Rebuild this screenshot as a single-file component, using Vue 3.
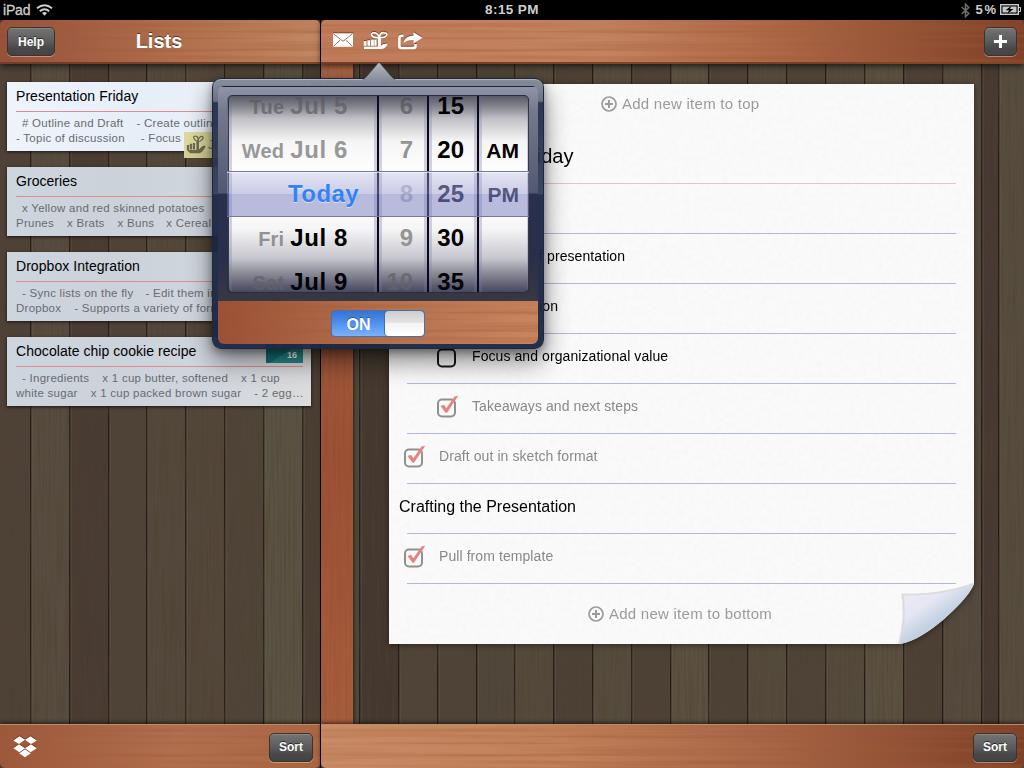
<script setup>
const plankEdges = [-9, 31, 70, 109, 147, 186, 225, 264, 303, 321, 360, 399, 438, 477, 515, 554, 593, 632, 671, 709, 748, 787, 826, 865, 904, 943, 982, 999, 1024]
const plankFills = ['#4e4137', '#564c3f', '#483b32', '#4f4338', '#52483b', '#52473a', '#4f4438', '#5a5343', '#493d33', '#51483b', '#43382f', '#504439', '#4f4338', '#50473b', '#544a3c', '#4c4035', '#554c3e', '#4d4136', '#5a5141', '#4d4136', '#544b3c', '#4e4337', '#544b3c', '#5a5140', '#4c4035', '#544a3d', '#463931', '#564d3f']
const planks = plankFills.map((fill, i) => ({ x: plankEdges[i], w: plankEdges[i + 1] - plankEdges[i], fill }))

const lists = [
  { title: 'Presentation Friday', active: true, lines: [[[6, '# Outline and Draft'], [13, '- Create outline of']], [[0, '- Topic of discussion'], [16, '- Focus']]] },
  { title: 'Groceries', lines: [[[6, 'x Yellow and red skinned potatoes']], [[0, 'Prunes'], [13, 'x Brats'], [13, 'x Buns'], [12, 'x Cereal']]] },
  { title: 'Dropbox Integration', lines: [[[6, '- Sync lists on the fly'], [12, '- Edit them in']], [[0, 'Dropbox'], [13, '- Supports a variety of formats']]] },
  { title: 'Chocolate chip cookie recipe', badge: true, lines: [[[6, '- Ingredients'], [13, 'x 1 cup butter, softened'], [13, 'x 1 cup']], [[0, 'white sugar'], [13, 'x 1 cup packed brown sugar'], [13, '- 2 egg…']]] },
]

const items = [
  { text: 'Outline and Draft', kind: 'head' },
  { text: 'Create outline of presentation', kind: 'item' },
  { text: 'Topic of discussion', kind: 'item' },
  { text: 'Focus and organizational value', kind: 'item', sub: true },
  { text: 'Takeaways and next steps', kind: 'item', sub: true, done: true },
  { text: 'Draft out in sketch format', kind: 'item', done: true },
  { text: 'Crafting the Presentation', kind: 'head' },
  { text: 'Pull from template', kind: 'item', done: true },
]

const days = [
  { day: 'Tue', date: 'Jul 5', past: true },
  { day: 'Wed', date: 'Jul 6', past: true },
  { today: true },
  { day: 'Fri', date: 'Jul 8' },
  { day: 'Sat', date: 'Jul 9' },
]
const hours = ['6', '7', '8', '9', '10']
const minutes = ['15', '20', '25', '30', '35']
const periods = ['', 'AM', 'PM', '', '']
</script>

<template>
  <div class="screen">
    <svg class="floor" width="1024" height="768">
      <defs>
        <filter id="grainV" x="0" y="0" width="100%" height="100%">
          <feTurbulence type="fractalNoise" baseFrequency="0.45 0.012" numOctaves="3" seed="4" />
          <feColorMatrix values="0 0 0 0 .08  0 0 0 0 .05  0 0 0 0 .03  1.2 0 0 0 -.48" />
        </filter>
        <filter id="grainH" x="0" y="0" width="100%" height="100%">
          <feTurbulence type="fractalNoise" baseFrequency="0.004 0.22" numOctaves="3" seed="9" />
          <feColorMatrix values="0 0 0 0 .35  0 0 0 0 .1  0 0 0 0 .03  .9 0 0 0 -.34" />
        </filter>
        <filter id="fibre" x="0" y="0" width="100%" height="100%">
          <feTurbulence type="fractalNoise" baseFrequency="0.18" numOctaves="2" seed="2" />
          <feColorMatrix values="0 0 0 0 .5  0 0 0 0 .5  0 0 0 0 .5  .1 0 0 0 -.036" />
        </filter>
      </defs>
      <g v-for="p in planks" :key="p.x">
        <rect :x="p.x" y="0" :width="p.w" height="768" :fill="p.fill" />
        <rect :x="p.x - 1" y="0" width="1.4" height="768" fill="#241c18" />
        <rect :x="p.x + 0.6" y="0" width="1" height="768" fill="#6a5e4e" opacity=".5" />
      </g>
      <rect width="1024" height="768" filter="url(#grainV)" />
    </svg>

    <header class="status">
      <div class="st-left">
        <span>iPad</span>
        <svg width="17" height="12" viewBox="0 0 17 12" fill="none" stroke="#cfcfcf" stroke-width="2">
          <path d="M1 4.3Q8.500 -1.700 16 4.300" /><path d="M3.800 7.200Q8.500 3.200 13.200 7.200" />
          <path d="M6 9L8.500 11.700 11 9Q8.500 7.200 6 9Z" fill="#cfcfcf" stroke="none" />
        </svg>
      </div>
      <span class="clock">8:15 PM</span>
      <div class="st-right">
        <svg width="9" height="15" viewBox="0 0 9 15" fill="none" stroke="#707070" stroke-width="1.500"><path d="M.7 4L7.800 10.500 4.500 13.700V1.300L7.800 4.500 .7 11" /></svg>
        <span class="pct">5 %</span>
        <svg class="batt" width="21" height="12" viewBox="0 0 21 12">
          <rect x=".7" y=".7" width="17.600" height="9.600" fill="none" stroke="#ccc" stroke-width="1.400" />
          <rect x="2.500" y="2.500" width="14" height="6" fill="#c8c8c8" />
          <path d="M19 3.500h1.500v4H19" fill="none" stroke="#ccc" /><path d="M11.500 1.700L5.500 6.300H9L7.500 9.700L13.500 5H10Z" fill="#000" />
        </svg>
      </div>
    </header>

    <main class="split">
      <section class="side">
        <div class="bar top side-top">
          <svg class="grain" width="320" height="44"><rect width="320" height="44" filter="url(#grainH)" /></svg>
          <button class="btn help">Help</button>
          <h1>Lists</h1>
        </div>
        <div class="cards">
          <article v-for="l in lists" :key="l.title" class="card" :class="{ active: l.active }">
            <h2>{{ l.title }}</h2>
            <div class="preview">
              <p v-for="(line, n) in l.lines" :key="n">
                <span v-for="seg in line" :key="seg[1]" :style="{ marginLeft: seg[0] + 'px' }">{{ seg[1] }}</span>
              </p>
            </div>
            <div v-if="l.active" class="sticky">
              <svg width="20" height="22" viewBox="0 0 24 24" fill="#6d6b50">
                <path d="M1 12h2.700v6H1zM4.600 10.500h2.700v7H4.600zM8.200 9.500h2.700v8H8.200zM12.500 8h3v10h-3zM1 18h13c2 0 3-4 8-5.500l1.500 1c-2 5-5 8.500-9 8.500H5z" />
                <path d="M14 8C8 5 8 1 12 1.500S14 8 14 8C15 3 18 .5 20 2S18 8 14 8Z" fill="none" stroke="#6d6b50" stroke-width="1.500" />
              </svg>
              <span>Ju</span>
            </div>
            <div v-if="l.badge" class="badge"><i>3</i><b>16</b></div>
          </article>
        </div>
        <div class="bar bottom side-bottom">
          <svg class="grain" width="320" height="44"><rect width="320" height="44" filter="url(#grainH)" /></svg>
          <svg class="dropbox" width="24" height="22" viewBox="0 0 24 22" fill="#fff">
            <path d="M6.500 .3L12 3.800 6 8 .3 4.500ZM17.500 .3L12 3.800 18 8 23.700 4.500ZM6 8.200L12 12.300 6.500 16.200 .3 12.300ZM18 8.200L12 12.300 17.500 16.200 23.700 12.300ZM12 13.200L17.800 17.200 12 21.200 6.200 17.200Z" />
          </svg>
          <button class="btn sort">Sort</button>
        </div>
      </section>

      <section class="detail">
        <div class="bar top detail-top">
          <svg class="grain" width="703" height="44"><rect width="703" height="44" filter="url(#grainH)" /></svg>
          <svg class="tools" width="92" height="20" viewBox="0 0 92 20">
            <path d="M0 2.300h20v13.500H0z" fill="#fff" /><path d="M.5 2.800L10 10.300 19.500 2.800M.5 15.300L7.500 8.800M19.500 15.300L12.500 8.800" fill="none" stroke="#99735f" />
            <g fill="#fff">
              <path d="M30.700 10h2.800v4.800h-2.800zM34.400 9.300h2.800v5.500h-2.800zM38.100 8.500h2.800v6.300h-2.800zM41.300 8.500h2.300v6.300h-2.300zM45 6h3v9.500h-3z" />
              <path d="M31 15.600h13.500c3 0 4-1.500 6-2.500l4-.7c-1 4-3.500 5.600-7.500 5.600H31z" />
              <path d="M46.300 6.500C38 7.500 36.500 1.800 41 1.700S46 6.500 46.300 6.500C47 2.500 49 1.500 51 1.700 56 2 54.500 7 46.300 6.500Z" fill="none" stroke="#fff" stroke-width="1.600" />
              <path d="M80.500 1.200L89.500 6.700 80.500 12.300V9C75.500 8.800 73.500 10 70.500 12 71.500 7 75 4.700 80.500 4.700Z" />
            </g>
            <path d="M70.500 4.800H68.500Q66.400 4.800 66.400 7V15Q66.400 17 68.500 17H80.500Q82.500 17 82.500 15V13" fill="none" stroke="#fff" stroke-width="2.600" />
          </svg>
          <button class="btn add"><svg width="13" height="13"><path d="M0 6.500h13M6.500 0v13" stroke="#fff" stroke-width="3" /></svg></button>
        </div>

        <div class="body">
          <div class="rail"><svg width="32" height="660"><rect width="32" height="660" filter="url(#grainV)" opacity=".3" /></svg></div>
          <div class="sheet">
            <svg class="paper" width="585" height="560">
              <defs><linearGradient id="curl" x1=".15" y1=".1" x2=".65" y2=".7"><stop offset="0" stop-color="#ece9f5" /><stop offset=".4" stop-color="#e5e7f3" /><stop offset=".75" stop-color="#c5d3e2" /><stop offset="1" stop-color="#b8cddd" /></linearGradient>
                <clipPath id="sheetShape"><path d="M0 0H585V500C580 512 566 525 554 536C542 546 525 558 511 560H0Z" /></clipPath></defs>
              <g clip-path="url(#sheetShape)"><rect width="585" height="560" fill="#fafafa" /><rect width="585" height="560" filter="url(#fibre)" />
                <path d="M514.500 511.500Q550 513 585 501L554 536L511 560Q518 535 514.500 511.500Z" fill="none" stroke="#777" stroke-opacity=".22" stroke-width="4" />
              </g>
              <path d="M515 511.500Q555 512 585 500C580 512 566 525 554 536C542 546 525 558 511 560Q518 540 515 511.500Z" fill="url(#curl)" />
            </svg>
            <div class="adder first"><svg width="16" height="16" viewBox="0 0 16 16" fill="none" stroke="#9b9b9b" stroke-width="1.700"><circle cx="8" cy="8" r="7" /><path d="M4 8h8M8 4v8" stroke-width="2" /></svg>Add new item to top</div>
            <h3>Presentation Friday</h3>
            <ul>
              <li v-for="it in items" :key="it.text" :class="[it.kind, { done: it.done, sub: it.sub }]">
                <svg v-if="it.kind === 'item'" class="check" width="24" height="24" viewBox="0 0 24 24" fill="none">
                  <rect x="2" y="4.500" width="17" height="17" rx="4" :stroke="it.done ? '#909090' : '#181818'" stroke-width="2" />
                  <path v-if="it.done" d="M4.500 11L8 9.700 10.300 13.200 18.500 1.500 22.200 .8 20.500 3.500 11 17.800H9.500Z" fill="#e28484" />
                </svg>
                <span>{{ it.text }}</span>
              </li>
            </ul>
            <div class="adder last"><svg width="16" height="16" viewBox="0 0 16 16" fill="none" stroke="#9b9b9b" stroke-width="1.700"><circle cx="8" cy="8" r="7" /><path d="M4 8h8M8 4v8" stroke-width="2" /></svg>Add new item to bottom</div>
          </div>
        </div>

        <div class="bar bottom detail-bottom">
          <svg class="grain" width="703" height="44"><rect width="703" height="44" filter="url(#grainH)" /></svg>
          <button class="btn sort">Sort</button>
        </div>
      </section>
    </main>

    <div class="popover">
      <svg class="arrow" width="40" height="20" viewBox="0 0 40 20"><defs><linearGradient id="tip" x2="0" y2="1"><stop stop-color="#b4b9c1" /><stop offset="1" stop-color="#868c99" /></linearGradient></defs><path d="M1 20Q5 19 8 15L20 1 32 15Q35 19 39 20Z" fill="url(#tip)" /><path d="M4 18.500L8 15L20 1 32 15L36 18.500" fill="none" stroke="#343840" stroke-width=".7" /></svg>
      <div class="inner">
        <div class="picker">
          <div class="wheels">
            <div class="wheel dates">
              <div v-for="(d, n) in days" :key="n" class="cell" :class="{ past: d.past, current: d.today }">
                <span v-if="d.today" class="today">Today</span>
                <template v-else><small>{{ d.day }}</small><span class="date">{{ d.date }}</span></template>
              </div>
            </div>
            <div class="wheel hours"><div v-for="h in hours" :key="h" class="cell" :class="{ pale: h === '8' }">{{ h }}</div></div>
            <div class="wheel mins"><div v-for="m in minutes" :key="m" class="cell">{{ m }}</div></div>
            <div class="wheel ampm"><div v-for="(m, n) in periods" :key="n" class="cell">{{ m }}</div></div>
          </div>
          <div class="glass"></div>
        </div>
        <div class="switchbar">
          <svg class="grain" width="320" height="42"><rect width="320" height="42" filter="url(#grainH)" /></svg>
          <div class="toggle"><span>ON</span><i></i></div>
        </div>
      </div>
    </div>
  </div>
</template>

<style>
html, body { margin: 0; background: #000; overflow: hidden; }
</style>

<style scoped>
* { box-sizing: border-box; }
.screen { position: relative; width: 1024px; height: 768px; overflow: hidden; background: #000; font-family: "Liberation Sans", Arial, sans-serif; color: #000; display: flex; flex-direction: column; }
.floor { position: absolute; left: 0; top: 0; }
.status { position: relative; height: 20px; background: #000; color: #cfcfcf; display: grid; grid-template-columns: 1fr auto 1fr; align-items: center; font-size: 14px; flex: none; }
.st-left { display: flex; align-items: center; gap: 6px; padding-left: 3px; line-height: 18px; }
.st-left span { -webkit-text-stroke: .3px #cfcfcf; letter-spacing: -.2px; }
.clock { font-weight: bold; font-size: 13.5px; letter-spacing: .4px; line-height: 18px; }
.st-right { display: flex; justify-content: flex-end; align-items: center; padding-right: 3px; line-height: 18px; }
.pct { font-size: 13px; font-weight: bold; margin: 0 4px 0 6px; word-spacing: -2px; }
.batt { margin-top: -1px; }
.split { position: relative; display: flex; flex: 1; min-height: 0; }
.side { width: 321px; border-right: 1px solid #080504; display: flex; flex-direction: column; }
.detail { flex: 1; display: flex; flex-direction: column; }
.bar { position: relative; height: 44px; display: flex; align-items: center; z-index: 1; flex: none; overflow: visible; }
.grain { position: absolute; inset: 0; border-radius: inherit; }
.top { border-bottom: 2px solid #713c27; box-shadow: 0 2px 6px rgba(0,0,0,.65); border-radius: 5px 5px 0 0; }
.bottom { border-top: 1px solid #c08b69; box-shadow: 0 -1px 4px rgba(0,0,0,.65); border-radius: 0 0 5px 5px; }
.side-top { background: linear-gradient(90deg, #96503a, #b06f4e 55%, #c18763); justify-content: center; }
.side-bottom { background: linear-gradient(90deg, #9c583b, #b26f4f 55%, #aa6846); padding: 0 7px 0 13px; justify-content: space-between; }
.detail-top { background: linear-gradient(90deg, #c17d5b, #c38361 40%, #b26d4b 60%, #7e4028); padding: 0 7px 0 12px; justify-content: space-between; }
.detail-bottom { background: linear-gradient(90deg, #c98c67, #c08059 35%, #ac694a 60%, #7c3f27); padding-right: 7px; justify-content: flex-end; }
h1 { position: relative; margin: 0; font-size: 20px; line-height: 24px; color: #fff; text-shadow: 0 -1px 0 rgba(0,0,0,.5); margin-left: -2px; }
.btn { position: relative; height: 29px; border-radius: 5px; border: 1px solid #38342f; padding: 0; background: linear-gradient(#747474, #5b5b5b 50%, #484848 75%, #434343); color: #fff; font: bold 12px "Liberation Sans", Arial, sans-serif; text-shadow: 0 -1px 0 rgba(0,0,0,.6); box-shadow: 0 1px 0 rgba(255,220,190,.45), inset 0 1px 0 rgba(255,255,255,.15); display: flex; align-items: center; justify-content: center; }
.help { position: absolute; left: 7px; top: 7px; width: 48px; }
.sort { width: 44px; margin-top: 1px; }
.add { width: 33px; }
.tools { position: relative; filter: drop-shadow(0 -1px 0 rgba(60,20,5,.5)); }
.dropbox { position: relative; filter: drop-shadow(0 -1px 0 rgba(60,20,5,.5)); }

.cards { flex: 1; padding: 18px 9px 0 7px; display: flex; flex-direction: column; gap: 16px; }
.card { position: relative; height: 69px; padding: 0 8px 0 9px; background: linear-gradient(100deg, #cdd5de, #cbd2da 35%, #d0d6de 65%, #dcdcdc); box-shadow: 0 1px 3px rgba(0,0,0,.7); }
.card.active { background: linear-gradient(100deg, #eef4fc, #e6eef8 45%, #f3f5f8); }
.card h2 { margin: 0; height: 30px; border-bottom: 1px solid #df8d90; font-size: 14px; font-weight: normal; line-height: 29px; letter-spacing: .05px; }
.preview { padding-top: 4px; margin-right: -6px; overflow: hidden; }
.preview p { margin: 0; height: 15px; line-height: 15px; display: flex; white-space: nowrap; font-size: 11.5px; letter-spacing: .26px; color: #696b6e; }
.sticky { position: absolute; left: 177px; top: 50px; width: 110px; height: 26px; background: rgba(219,214,154,.96); display: flex; align-items: center; gap: 2px; padding-left: 2px; font-size: 12px; color: #77745b; }
.badge { position: absolute; left: 259px; top: 2px; width: 37px; height: 24px; background: linear-gradient(147deg, #157176 54%, #26898b 56%); color: #fff; font-size: 9px; }
.badge i { position: absolute; left: 10px; top: 0; font-style: normal; }
.badge b { position: absolute; right: 6px; bottom: 3px; line-height: 10px; }

.body { flex: 1; display: flex; min-height: 0; }
.rail { width: 32px; background: linear-gradient(#ab6546, #9d5134 60%, #a85d3c); box-shadow: 1px 0 3px rgba(0,0,0,.5); overflow: hidden; }
.rail svg { display: block; }
.sheet { position: relative; width: 585px; height: 560px; margin: 20px 0 0 36px; filter: drop-shadow(0 1px 3px rgba(0,0,0,.45)); }
.paper { position: absolute; left: 0; top: 0; }
.adder { position: relative; display: flex; align-items: center; gap: 5px; color: #9b9b9b; font-size: 15px; letter-spacing: .25px; line-height: 20px; height: 20px; }
.first { padding: 0 0 0 212px; margin-top: 10px; }
.last { padding: 0 0 0 199px; margin-top: 20px; }
.sheet h3 { position: relative; margin: 0; height: 70px; padding: 31px 0 0 11px; font-weight: normal; font-size: 20px; line-height: 22px; }
.sheet h3::after { content: ''; position: absolute; left: 10px; right: 18px; bottom: 0; height: 1px; background: #f0bfc4; }
ul { position: relative; list-style: none; margin: 0; padding: 0; }
li { position: relative; height: 50px; display: flex; padding: 11px 0 0 14px; font-size: 14px; line-height: 22px; letter-spacing: .08px; }
li::after { content: ''; position: absolute; left: 18px; right: 18px; bottom: 0; height: 1px; background: #b0b9d8; }
li.sub { padding-left: 47px; }
li.head { padding: 12px 0 0 10px; font-size: 16px; letter-spacing: 0; }
li.done { color: #898989; }
.check { margin: 0 12px 0 0; flex: none; }

.popover { position: absolute; left: 212px; top: 78px; width: 332px; height: 271px; border-radius: 9px; padding: 7px 6px 6px; background: linear-gradient(rgba(135,143,157,.98), rgba(101,110,130,.97) 22px, rgba(31,42,75,.94) 24px, rgba(48,60,88,.94) 115px, rgba(24,36,70,.94) 116px, rgba(27,39,69,.96)); border: 1px solid #202838; box-shadow: inset 0 1px 0 #afb3b9, 0 12px 26px rgba(0,0,0,.48), 0 3px 9px rgba(0,0,0,.35); z-index: 3; }
.arrow { position: absolute; left: 146px; top: -18px; }
.inner { width: 320px; height: 258px; margin-left: -1px; border-radius: 6px; overflow: hidden; }
.picker { position: relative; height: 215px; padding: 8px 9px 0 10px; background: linear-gradient(#9194a8, #75798c 24px, #505971 106px, #29304e 107px, #292f4a 170px, #373842); border-top: 1px solid #1f2533; }
.wheels { height: 198px; display: grid; grid-template-columns: 148px 48px 48px 51px; gap: 2px; background: #090a12; border-radius: 5px; overflow: hidden; border: 1px solid #383a4a; }
.wheel { overflow: hidden; background: linear-gradient(#84848f 0, #bababf 10%, #f5f5f5 23%, #fff 40%, #fff 55%, #f5f5f6 68%, #c9c9cf 82%, #90909d 92%, #5c5c73); box-shadow: inset 3px 0 0 rgba(139,139,183,.38), inset -3px 0 0 rgba(139,139,183,.38); }
.wheel::before { content: ''; display: block; height: 0; margin-top: -12px; }
.cell { height: 44px; line-height: 44px; font-size: 24px; font-weight: bold; text-align: right; }
.dates .cell { display: flex; justify-content: flex-end; padding-right: 29px; }
.dates small { font-size: 20px; line-height: 46px; color: #919193; padding-right: 6px; letter-spacing: .2px; }
.dates .cell:last-child small { color: #75757c; }
.date { letter-spacing: .6px; }
.past, .dates .past small { color: #989899; }
.dates .past:nth-child(1), .dates .past:nth-child(1) small { color: #7d7d80; }
.dates .current { position: relative; z-index: 2; text-shadow: 0 1px 0 rgba(255,255,255,.55); }
.dates .today { color: #3284f6; margin-right: -11px; letter-spacing: .4px; }
.hours .cell { padding-right: 14px; color: #949494; }
.hours .cell:first-child, .hours .cell:last-child { color: #77777d; }
.hours .pale { color: #c4c4ca; }
.mins .cell { padding-right: 13px; }
.ampm .cell { font-size: 21px; line-height: 46px; padding-right: 11px; }
.mins .cell:nth-child(3), .ampm .cell:nth-child(3) { color: #24273c; }
.glass { position: absolute; left: 9px; top: 8px; width: 302px; height: 198px; pointer-events: none; border-radius: 5px; background: linear-gradient(rgba(25,25,40,.4), transparent 24px, transparent 165px, rgba(10,10,35,.25)); z-index: 1; }
.glass::after { content: ''; position: absolute; left: 0; right: 0; top: 76px; height: 44px; border: solid #747a93; border-width: 1px 0; background: linear-gradient(rgba(170,174,217,.33), rgba(148,151,205,.48) 49%, rgba(112,118,185,.5) 50%, rgba(112,118,185,.48)); box-shadow: inset 0 1px 0 rgba(255,255,255,.6); }
.switchbar { position: relative; height: 43px; display: flex; align-items: center; justify-content: center; background: linear-gradient(90deg, #9a5035, #b5704f 50%, #c8855f); }
.toggle { position: relative; width: 94px; height: 27px; border-radius: 4px; display: flex; background: linear-gradient(#3a72cf, #4a8eee 45%, #79b3fa); border: 1px solid #4772ac; overflow: hidden; color: #fff; font-weight: bold; font-size: 16px; line-height: 27px; margin-top: 2px; }
.toggle span { width: 53px; text-align: center; text-shadow: 0 -1px 0 rgba(0,0,0,.4); }
.toggle i { flex: 1; border-radius: 4px; background: linear-gradient(#ccc, #e6e6e6 49%, #f4f4f4 50%, #fff); box-shadow: -1px 0 0 #4b6d9c; }
</style>
